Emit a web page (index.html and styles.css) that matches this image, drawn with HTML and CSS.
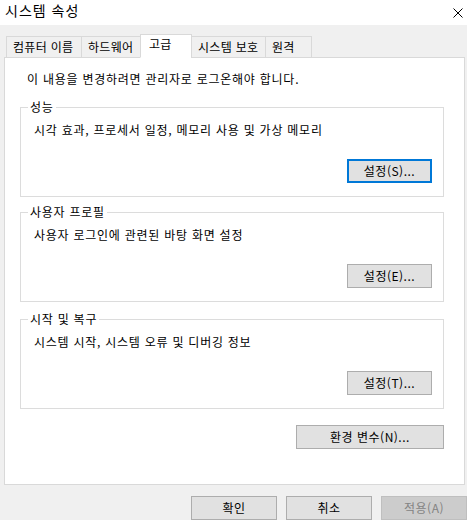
FILE: index.html
```html
<!DOCTYPE html>
<html lang="ko">
<head>
    <meta charset="UTF-8">
    <meta name="viewport" content="width=device-width, initial-scale=1.0">
    <title>시스템 속성</title>
    <link rel="stylesheet" href="styles.css">
</head>
<body>
    <div class="titlebar">
        <div class="title">시스템 속성</div>
        <svg class="close" width="10" height="10" viewBox="0 0 10 10">
            <path d="M0.5 0.5 L9.5 9.5 M9.5 0.5 L0.5 9.5" stroke="#000" stroke-width="1" fill="none"/>
        </svg>
    </div>

    <div class="tabs">
        <div class="tab tab-name">컴퓨터 이름</div>
        <div class="tab tab-hw">하드웨어</div>
        <div class="tab tab-adv active">고급</div>
        <div class="tab tab-prot">시스템 보호</div>
        <div class="tab tab-remote">원격</div>
    </div>

    <div class="panel">
        <div class="intro">이 내용을 변경하려면 관리자로 로그온해야 합니다.</div>

        <fieldset class="group first">
            <legend>성능</legend>
            <div class="desc">시각 효과, 프로세서 일정, 메모리 사용 및 가상 메모리</div>
            <div class="group-actions">
                <button class="btn focused">설정(S)...</button>
            </div>
        </fieldset>

        <fieldset class="group second">
            <legend>사용자 프로필</legend>
            <div class="desc">사용자 로그인에 관련된 바탕 화면 설정</div>
            <div class="group-actions">
                <button class="btn">설정(E)...</button>
            </div>
        </fieldset>

        <fieldset class="group third">
            <legend>시작 및 복구</legend>
            <div class="desc">시스템 시작, 시스템 오류 및 디버깅 정보</div>
            <div class="group-actions">
                <button class="btn">설정(T)...</button>
            </div>
        </fieldset>

        <div class="env-row">
            <button class="btn wide">환경 변수(N)...</button>
        </div>
    </div>

    <div class="actions">
        <button class="btn">확인</button>
        <button class="btn">취소</button>
        <button class="btn" disabled>적용(A)</button>
    </div>
</body>
</html>
```

FILE: styles.css
```css
html, body {
    overflow: hidden;
}

body {
    margin: 0;
    padding: 0;
    background: #f0f0f0;
    font-family: "Noto Sans CJK KR", "Noto Sans", sans-serif;
    font-size: 12px;
    line-height: 16px;
    letter-spacing: 0.75px;
    color: #000;
}

.titlebar {
    height: 25px;
    background: white;
    display: flex;
    justify-content: space-between;
    align-items: flex-start;
}
.title {
    font-size: 14px;
    line-height: 21px;
    margin-left: 5px;
    letter-spacing: 1px;
}
.close {
    margin: 8px 4px 0 0;
}

.tabs {
    display: flex;
    align-items: flex-end;
    margin: 9px 0 -1px 6px;
    position: relative;
    z-index: 1;
}
.tab {
    box-sizing: border-box;
    height: 22px;
    line-height: 20px;
    padding: 0 0 0 6px;
    border: 1px solid #d9d9d9;
    margin-right: -1px;
    background: #f0f0f0;
    letter-spacing: 0.3px;
}
.tab.active {
    height: 24px;
    line-height: 18px;
    background: white;
    border-bottom-color: white;
    padding-left: 8px;
}
.tab-name { width: 76px; }
.tab-hw { width: 60px; }
.tab-adv { width: 52px; }
.tab-prot { width: 75px; }
.tab-remote { width: 47px; }

.panel {
    box-sizing: border-box;
    height: 428px;
    margin: 0 2px 0 4px;
    padding: 13px 20px 0 15px;
    background: white;
    border: 1px solid #d9d9d9;
}
.intro {
    margin-left: 7px;
}

.group {
    margin: 0;
    padding: 7px 11px 13px 12px;
    border: 1px solid #dcdcdc;
    min-inline-size: 0;
}
.group legend {
    padding: 0 2px;
    margin-left: -5px;
    line-height: 16px;
}
.group.first {
    margin-top: 12px;
}
.group.second {
    margin-top: 7px;
}
.group.third {
    margin-top: 9px;
}
.desc {
    margin-left: 1px;
}
.group-actions {
    display: flex;
    justify-content: flex-end;
    margin-top: 21px;
}

.btn {
    box-sizing: border-box;
    width: 85px;
    height: 24px;
    padding: 0;
    font-family: "Noto Sans CJK KR", "Noto Sans", sans-serif;
    font-size: 12px;
    line-height: 16px;
    letter-spacing: 0.5px;
    color: #000;
    background: #e1e1e1;
    border: 1px solid #adadad;
}
.btn.focused {
    border: 2px solid #0078d7;
}
.btn.wide {
    width: 148px;
}
.btn:disabled {
    background: #cccccc;
    border-color: #bfbfbf;
    color: #838383;
}

.env-row {
    display: flex;
    justify-content: flex-end;
    margin-top: 16px;
}

.actions {
    display: flex;
    justify-content: flex-end;
    gap: 9px;
    margin-top: 11px;
}
.actions .btn {
    width: 86px;
}
```
